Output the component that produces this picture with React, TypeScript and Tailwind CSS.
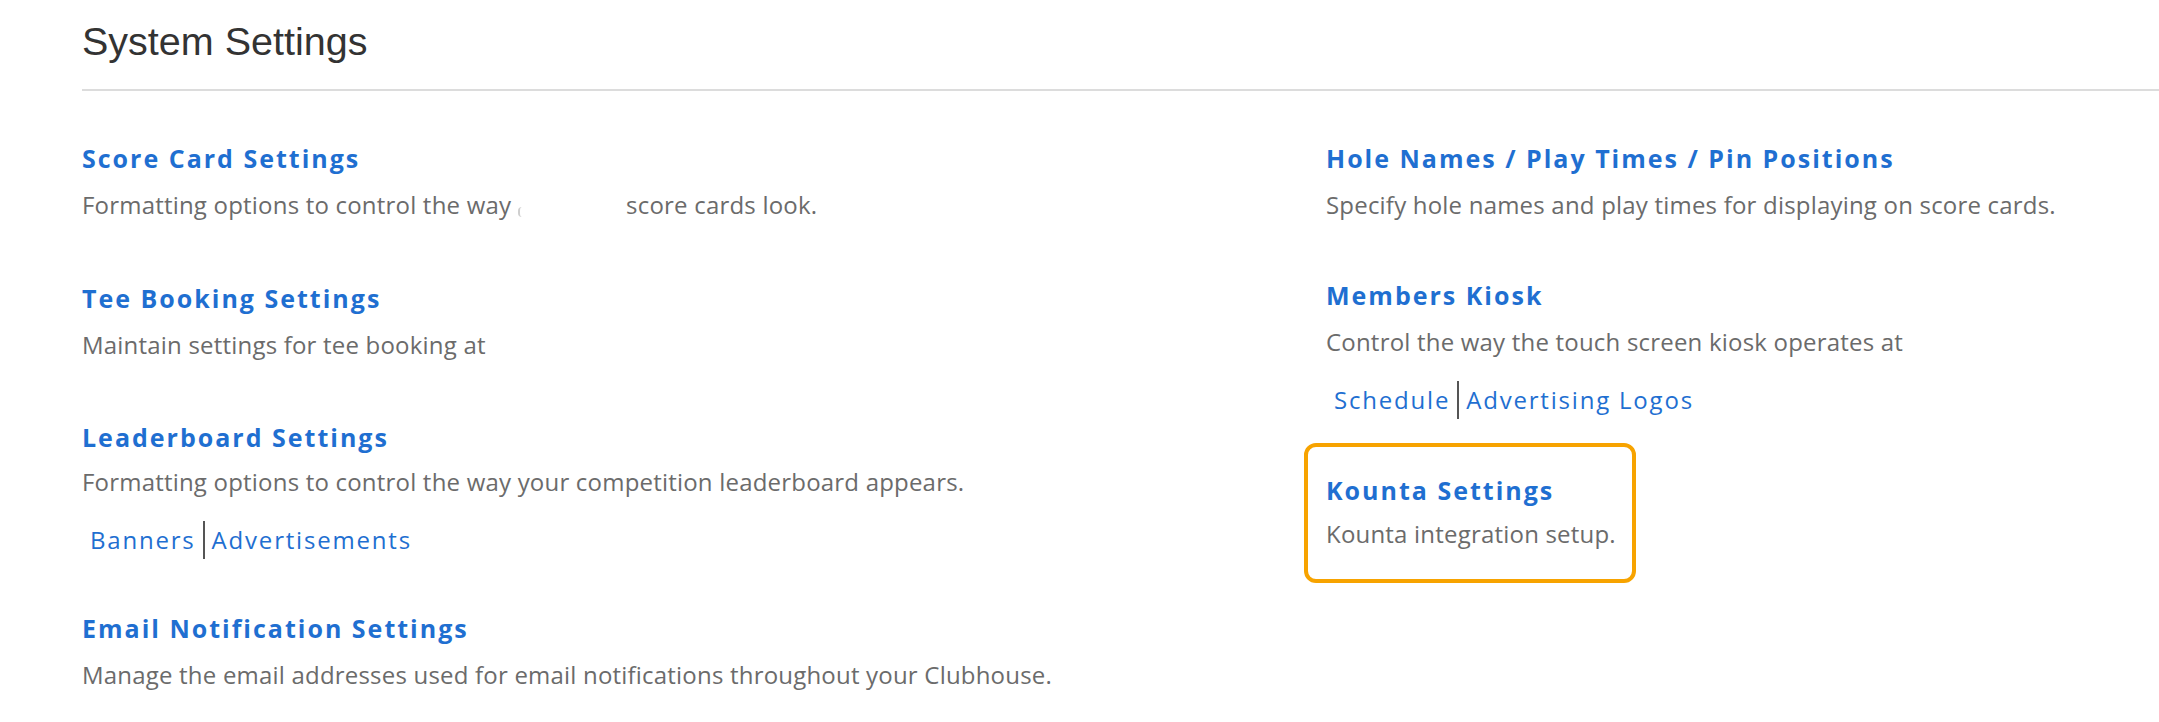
import React from "react";

function Title({ children }: { children: React.ReactNode }) {
  return (
    <div className="font-['Open_Sans',sans-serif] font-bold text-[25px] leading-[32px] tracking-[2px] text-[#1f6fd1] whitespace-nowrap">
      {children}
    </div>
  );
}

function Desc({ children, className }: { children: React.ReactNode; className: string }) {
  return (
    <div
      className={
        "font-['Open_Sans',sans-serif] text-[24px] leading-[32px] tracking-[0.2px] text-[#6b6b6b] whitespace-nowrap " +
        className
      }
    >
      {children}
    </div>
  );
}

function Links({ items }: { items: string[] }) {
  return (
    <div className="mt-[26px] flex h-[32px] items-center pl-[8px] font-['Open_Sans',sans-serif] text-[24px] leading-[32px] tracking-[1.8px] text-[#1f6fd1] whitespace-nowrap">
      {items.map((t, i) => (
        <React.Fragment key={t}>
          {i > 0 && <span className="mx-[7px] -my-[3px] h-[38px] w-[2px] bg-[#555555]" />}
          <a className="cursor-pointer">{t}</a>
        </React.Fragment>
      ))}
    </div>
  );
}

export default function App() {
  return (
    <div className="min-h-[722px] bg-white overflow-hidden">
      <div className="pl-[82px] pt-[22px]">
        <h1 className="font-['Liberation_Sans',Arial,sans-serif] text-[39.5px] leading-[38px] text-[#333333]">
          System Settings
        </h1>
        <div className="mt-[29px] h-[2px] bg-[#dcdcdc]" />
        <div className="mt-[51px] flex">
          <div className="w-[1244px] flex flex-col">
            <div>
              <Title>Score Card Settings</Title>
              <Desc className="mt-[15px]">
                Formatting options to control the way{" "}
                <span className="inline-block w-[102px] align-middle">
                  <span className="inline-block h-[10px] w-[4px] rounded-l-full border-l-[2px] border-[#cfcfcf]" />
                </span>{" "}
                score cards look.
              </Desc>
            </div>
            <div className="mt-[58px]">
              <Title>Tee Booking Settings</Title>
              <Desc className="mt-[15px]">Maintain settings for tee booking at</Desc>
            </div>
            <div className="mt-[60px]">
              <Title>Leaderboard Settings</Title>
              <Desc className="mt-[13px]">
                Formatting options to control the way your competition leaderboard appears.
              </Desc>
              <Links items={["Banners", "Advertisements"]} />
            </div>
            <div className="mt-[56px]">
              <Title>Email Notification Settings</Title>
              <Desc className="mt-[15px]">
                Manage the email addresses used for email notifications throughout your Clubhouse.
              </Desc>
            </div>
          </div>
          <div className="flex flex-col">
            <div>
              <Title>Hole Names / Play Times / Pin Positions</Title>
              <Desc className="mt-[15px]">Specify hole names and play times for displaying on score cards.</Desc>
            </div>
            <div className="mt-[58px]">
              <Title>Members Kiosk</Title>
              <Desc className="mt-[15px]">Control the way the touch screen kiosk operates at</Desc>
              <Links items={["Schedule", "Advertising Logos"]} />
            </div>
            <div className="mt-[27px] -ml-[22px] w-[332px] rounded-[12px] border-[4px] border-[#f7a300] pl-[18px] pt-[27px] pb-[29px]">
              <Title>Kounta Settings</Title>
              <Desc className="mt-[12px]">Kounta integration setup.</Desc>
            </div>
          </div>
        </div>
      </div>
    </div>
  );
}
